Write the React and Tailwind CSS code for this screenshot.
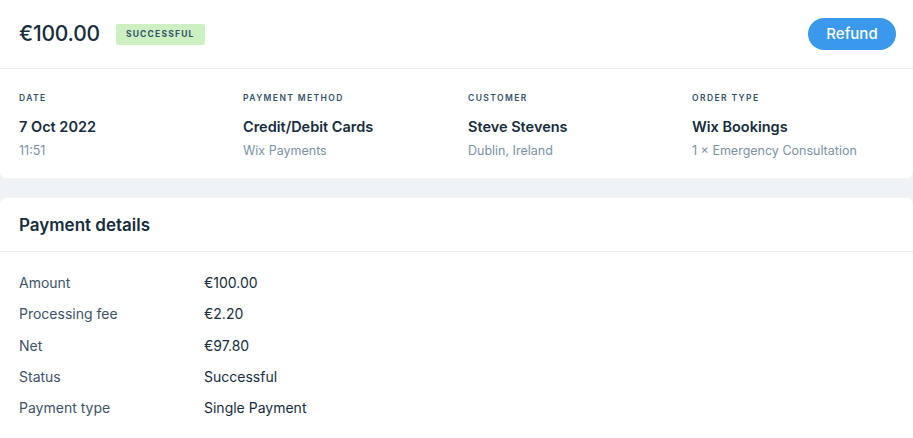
export default function App() {
  const info = [
    { label: "Date", value: "7 Oct 2022", sub: "11:51" },
    { label: "Payment method", value: "Credit/Debit Cards", sub: "Wix Payments" },
    { label: "Customer", value: "Steve Stevens", sub: "Dublin, Ireland" },
    { label: "Order type", value: "Wix Bookings", sub: "1 × Emergency Consultation" },
  ];

  const rows = [
    ["Amount", "€100.00"],
    ["Processing fee", "€2.20"],
    ["Net", "€97.80"],
    ["Status", "Successful"],
    ["Payment type", "Single Payment"],
  ];

  return (
    <div className="w-[913px] h-[438px] overflow-hidden bg-[#eff3f6] font-['Inter',sans-serif] text-[#162d3d]">
      {/* summary card */}
      <div className="bg-white h-[178px] rounded-b-md">
        <div className="h-[69px] flex items-center justify-between pl-[19px] pr-[17px] border-b border-[#e8ecef]">
          <div className="flex items-center gap-[16px]">
            <span className="text-[21px] font-medium tracking-[-0.2px]">€100.00</span>
            <span className="bg-[#cdf0c3] text-[#32536a] text-[8.5px] font-bold tracking-[1.2px] px-[10px] h-[21px] flex items-center rounded-[2px]">
              SUCCESSFUL
            </span>
          </div>
          <button className="bg-[#3b99ec] text-white text-[15px] font-medium rounded-full w-[88px] h-[32px]">
            Refund
          </button>
        </div>
        <div className="grid grid-cols-[224px_225px_224px_1fr] pl-[19px] pt-[22px]">
          {info.map((item) => (
            <div key={item.label} className="flex flex-col">
              <span className="text-[8.5px] font-semibold uppercase tracking-[1.4px] text-[#32536a] leading-[14px]">
                {item.label}
              </span>
              <span className="text-[14.5px] font-semibold mt-[12px] leading-[20px]">{item.value}</span>
              <span className="text-[12.5px] text-[#7a92a5] mt-[5px] leading-[18px]">{item.sub}</span>
            </div>
          ))}
        </div>
      </div>

      {/* payment details */}
      <div className="bg-white mt-[20px] rounded-t-md h-[240px]">
        <div className="h-[54px] flex items-center pl-[19px] pt-[3px] border-b border-[#e8ecef]">
          <span className="text-[17px] font-semibold">Payment details</span>
        </div>
        <div className="pl-[19px] pt-[15px] flex flex-col">
          {rows.map(([k, v]) => (
            <div key={k} className="flex h-[31.3px] items-center text-[14px]">
              <span className="w-[185px] text-[#3d5468]">{k}</span>
              <span>{v}</span>
            </div>
          ))}
        </div>
      </div>
    </div>
  );
}
